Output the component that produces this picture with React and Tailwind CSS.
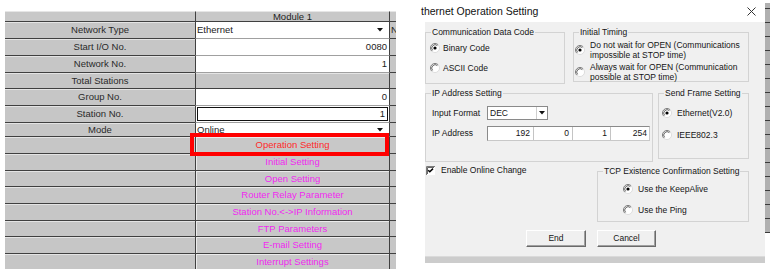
import React from "react";

const topRows = [
  { label: "Network Type", h: 17, v: "select", text: "Ethernet", sliver: "N" },
  { label: "Start I/O No.", h: 17, v: "num", text: "0080" },
  { label: "Network No.", h: 17, v: "num", text: "1" },
  { label: "Total Stations", h: 16, v: "gray" },
  { label: "Group No.", h: 17, v: "num", text: "0" },
  { label: "Station No.", h: 17, v: "edit", text: "1" },
  { label: "Mode", h: 14, v: "select", text: "Online" },
];

const btnRows = [
  ["Operation Setting", 17, true],
  ["Initial Setting", 17],
  ["Open Setting", 16],
  ["Router Relay Parameter", 17],
  ["Station No.<->IP Information", 17],
  ["FTP Parameters", 16],
  ["E-mail Setting", 17],
  ["Interrupt Settings", 17],
];

function Arrow() {
  return (
    <svg width="6" height="4" viewBox="0 0 6 4" className="shrink-0">
      <path d="M0 0 H6 L3 3.5 Z" fill="#111" />
    </svg>
  );
}

function ValueCell({ row }) {
  if (row.v === "gray") {
    return <div className="w-[195px] h-full bg-[#c6c6c6] border-l border-r border-b border-l-[#404040] border-r-[#404040] border-b-[#404040] shadow-[inset_0_1px_0_#e4e4e4]" />;
  }
  if (row.v === "select") {
    return (
      <div className="w-[195px] h-full bg-white border-l border-r border-b border-l-[#404040] border-r-[#404040] border-b-[#a0a0a0] flex items-center justify-between pl-[1px] pr-[6px] text-[#222]">
        <span className="leading-none">{row.text}</span>
        <Arrow />
      </div>
    );
  }
  if (row.v === "edit") {
    return (
      <div className="w-[195px] h-full bg-white border-l border-r border-b border-l-[#404040] border-r-[#404040] border-b-[#a0a0a0] p-[1px]">
        <div className="h-full border border-[#111] flex items-center justify-end pr-[2px] text-[#222] leading-none">{row.text}</div>
      </div>
    );
  }
  return (
    <div className="w-[195px] h-full bg-white border-l border-r border-b border-l-[#404040] border-r-[#404040] border-b-[#a0a0a0] flex items-center justify-end pr-[2px] text-[#222] leading-none">
      {row.text}
    </div>
  );
}

function LeftTable() {
  return (
    <div className="relative w-[396px] h-[269px] pl-[5px] pt-[11px] shrink-0 text-[9.5px]">
      {/* header */}
      <div className="flex h-[11px]">
        <div className="w-[190px] h-full bg-[#c8c8c8] border-t border-t-[#e6e6e6] border-b border-b-[#404040]" />
        <div className="w-[195px] h-full bg-[#c8c8c8] border-t border-t-[#e6e6e6] border-b border-b-[#404040] border-l border-l-[#404040] border-r border-r-[#404040] flex items-center justify-center text-[#222] leading-none">
          Module 1
        </div>
        <div className="w-[6px] h-full bg-[#c8c8c8] border-t border-t-[#e6e6e6] border-b border-b-[#404040]" />
      </div>
      {topRows.map((r) => (
        <div key={r.label} className="flex" style={{ height: r.h }}>
          <div className="w-[190px] h-full bg-[#c6c6c6] border-b border-b-[#404040] shadow-[inset_0_1px_0_#e4e4e4] flex items-center justify-center text-[#2a2a2a] leading-none">
            {r.label}
          </div>
          <ValueCell row={r} />
          <div className="w-[6px] h-full bg-[#c6c6c6] border-b border-b-[#404040] overflow-hidden flex items-center pl-[1px] text-[#222] leading-none">
            {r.sliver || ""}
          </div>
        </div>
      ))}
      {btnRows.map(([t, h, red]) => (
        <div key={t} className="flex" style={{ height: h }}>
          <div className="w-[190px] h-full bg-[#c6c6c6] border-b border-b-[#404040] shadow-[inset_0_1px_0_#e4e4e4]" />
          <div
            className={`w-[195px] h-full bg-[#c8c8c8] border-l border-r border-b border-l-[#404040] border-r-[#404040] border-b-[#404040] shadow-[inset_1px_1px_0_#ececec] flex items-center justify-center leading-none ${
              red ? "text-[#ff2a2a]" : "text-[#f028f0]"
            }`}
          >
            {t}
          </div>
          <div className="w-[6px] h-full bg-[#c6c6c6] border-b border-b-[#404040]" />
        </div>
      ))}
      <div className="absolute left-[190px] top-[133px] w-[199px] h-[23px] border-[4px] border-[#ff0000]" />
    </div>
  );
}

function Radio({ checked }) {
  return (
    <svg width="10" height="10" viewBox="0 0 10 10" className="shrink-0">
      <circle cx="5" cy="5" r="4.5" fill="#fff" />
      <path d="M1.8 8.2 A4.5 4.5 0 0 1 8.2 1.8" stroke="#7a7a7a" strokeWidth="1" fill="none" />
      <path d="M8.2 1.8 A4.5 4.5 0 0 1 1.8 8.2" stroke="#dcdcdc" strokeWidth="1" fill="none" />
      <path d="M2.6 7.4 A3.4 3.4 0 0 1 7.4 2.6" stroke="#404040" strokeWidth="0.8" fill="none" />
      {checked && <circle cx="5" cy="5" r="1.6" fill="#000" />}
    </svg>
  );
}

function Check() {
  return (
    <svg width="9" height="9" viewBox="0 0 9 9" className="shrink-0">
      <rect x="0" y="0" width="9" height="9" fill="#fff" />
      <path d="M0.5 9 V0.5 H9" stroke="#7a7a7a" fill="none" />
      <path d="M1.5 8 V1.5 H8" stroke="#404040" fill="none" strokeWidth="0.8" />
      <path d="M2.2 4.2 L3.8 5.8 L7 2.6" stroke="#000" strokeWidth="1.5" fill="none" />
    </svg>
  );
}

function Group({ title, className, children }) {
  return (
    <div className={`relative border border-[#d3d3d3] shrink-0 ${className}`}>
      <span className="absolute -top-[6px] left-[5px] px-[1px] bg-[#f0f0f0] leading-[10px] whitespace-nowrap">{title}</span>
      {children}
    </div>
  );
}

function Dialog() {
  return (
    <div className="flex flex-col w-[347px] shrink-0">
      <div className="h-[22px] bg-white flex items-center justify-between pl-[3px] pr-[9px] text-[10.5px] text-[#111]">
        <span className="leading-none">thernet Operation Setting</span>
        <svg width="9" height="9" viewBox="0 0 9 9">
          <path d="M0.5 0.5 L8.5 8.5 M8.5 0.5 L0.5 8.5" stroke="#333" strokeWidth="1" />
        </svg>
      </div>
      <div className="flex">
        <div className="w-[7px] bg-white shrink-0" />
        <div className="w-[340px] h-[234px] bg-[#f0f0f0] pt-[10px] text-[8.5px] text-[#141414] flex flex-col">
          {/* row 1 */}
          <div className="flex items-start">
            <Group title="Communication Data Code" className="w-[140px] h-[52px] pt-[9px] pl-[4px]">
              <div className="flex items-center gap-[3px] h-[12px]">
                <Radio checked />
                <span className="leading-none">Binary Code</span>
              </div>
              <div className="flex items-center gap-[3px] h-[12px] mt-[8px]">
                <Radio />
                <span className="leading-none">ASCII Code</span>
              </div>
            </Group>
            <Group title="Initial Timing" className="ml-[8px] w-[176px] h-[50px] pt-[7px] pl-[1px]">
              <div className="flex items-center gap-[5px]">
                <Radio checked />
                <div className="leading-[10px]">
                  <div>Do not wait for OPEN (Communications</div>
                  <div>impossible at STOP time)</div>
                </div>
              </div>
              <div className="flex items-center gap-[5px] mt-[2px]">
                <Radio />
                <div className="leading-[10px]">
                  <div>Always wait for OPEN (Communication</div>
                  <div>possible at STOP time)</div>
                </div>
              </div>
            </Group>
          </div>
          {/* row 2 */}
          <div className="flex items-start mt-[9px]">
            <Group title="IP Address Setting" className="w-[228px] h-[69px] pt-[12px] pl-[6px]">
              <div className="flex items-center h-[14px]">
                <span className="w-[55px] leading-none">Input Format</span>
                <div className="w-[61px] h-[14px] bg-white border border-[#8a8a8a] flex items-center justify-between pl-[2px]">
                  <span className="leading-none">DEC</span>
                  <div className="w-[11px] h-full border-l border-[#cfcfcf] flex items-center justify-center">
                    <Arrow />
                  </div>
                </div>
              </div>
              <div className="flex items-center h-[15px] mt-[6px]">
                <span className="w-[55px] leading-none">IP Address</span>
                <div className="flex h-[15px] bg-white border border-t-[#8a8a8a] border-l-[#8a8a8a] border-r-[#c8c8c8] border-b-[#c8c8c8]">
                  <div className="w-[46px] border-r border-[#c4c4c4] flex items-center justify-end pr-[3px] leading-none">192</div>
                  <div className="w-[39px] border-r border-[#c4c4c4] flex items-center justify-end pr-[3px] leading-none">0</div>
                  <div className="w-[38px] border-r border-[#c4c4c4] flex items-center justify-end pr-[3px] leading-none">1</div>
                  <div className="w-[38px] flex items-center justify-end pr-[2px] leading-none">254</div>
                </div>
              </div>
            </Group>
            <Group title="Send Frame Setting" className="ml-[5px] w-[91px] h-[66px] pt-[13px] pl-[3px]">
              <div className="flex items-center gap-[5px] h-[12px]">
                <Radio checked />
                <span className="leading-none">Ethernet(V2.0)</span>
              </div>
              <div className="flex items-center gap-[5px] h-[12px] mt-[10px]">
                <Radio />
                <span className="leading-none">IEEE802.3</span>
              </div>
            </Group>
          </div>
          {/* row 3 */}
          <div className="flex items-start mt-[2px]">
            <div className="w-[172px] shrink-0 flex items-center gap-[6px] h-[12px] pl-[1px]">
              <Check />
              <span className="leading-none">Enable Online Change</span>
            </div>
            <Group title="TCP Existence Confirmation Setting" className="mt-[7px] w-[152px] h-[51px] pt-[11px] pl-[25px]">
              <div className="flex items-center gap-[5px] h-[12px]">
                <Radio checked />
                <span className="leading-none">Use the KeepAlive</span>
              </div>
              <div className="flex items-center gap-[5px] h-[12px] mt-[9px]">
                <Radio />
                <span className="leading-none">Use the Ping</span>
              </div>
            </Group>
          </div>
          {/* buttons */}
          <div className="flex mt-[8px] pl-[101px]">
            <div className="w-[60px] h-[17px] bg-[#f0f0f0] border border-t-white border-l-white border-r-[#6a6a6a] border-b-[#6a6a6a] shadow-[inset_-1px_-1px_0_#a0a0a0] flex items-center justify-center leading-none">
              End
            </div>
            <div className="ml-[11px] w-[59px] h-[17px] bg-[#f0f0f0] border border-t-white border-l-white border-r-[#6a6a6a] border-b-[#6a6a6a] shadow-[inset_-1px_-1px_0_#a0a0a0] flex items-center justify-center leading-none">
              Cancel
            </div>
          </div>
        </div>
      </div>
      <div className="ml-[7px] w-[340px] h-[7px] bg-[#cccccc] border-t border-t-[#dadada]" />
    </div>
  );
}

function Strip() {
  const ticks = Array.from({ length: 16 });
  return (
    <div className="w-[5px] shrink-0 pt-[3px]">
      <div className="bg-[#b0b0b0] h-[6px] border-b border-b-[#3a3a3a]" />
      {ticks.map((_, i) => (
        <div key={i} className="bg-[#b0b0b0] h-[14px] border-b border-b-[#3a3a3a]" />
      ))}
    </div>
  );
}

export default function App() {
  return (
    <div className="w-[773px] h-[269px] overflow-hidden bg-white flex font-['Liberation_Sans',Arial,sans-serif]">
      <LeftTable />
      <div className="w-[22px] shrink-0" />
      <Dialog />
      <Strip />
    </div>
  );
}
